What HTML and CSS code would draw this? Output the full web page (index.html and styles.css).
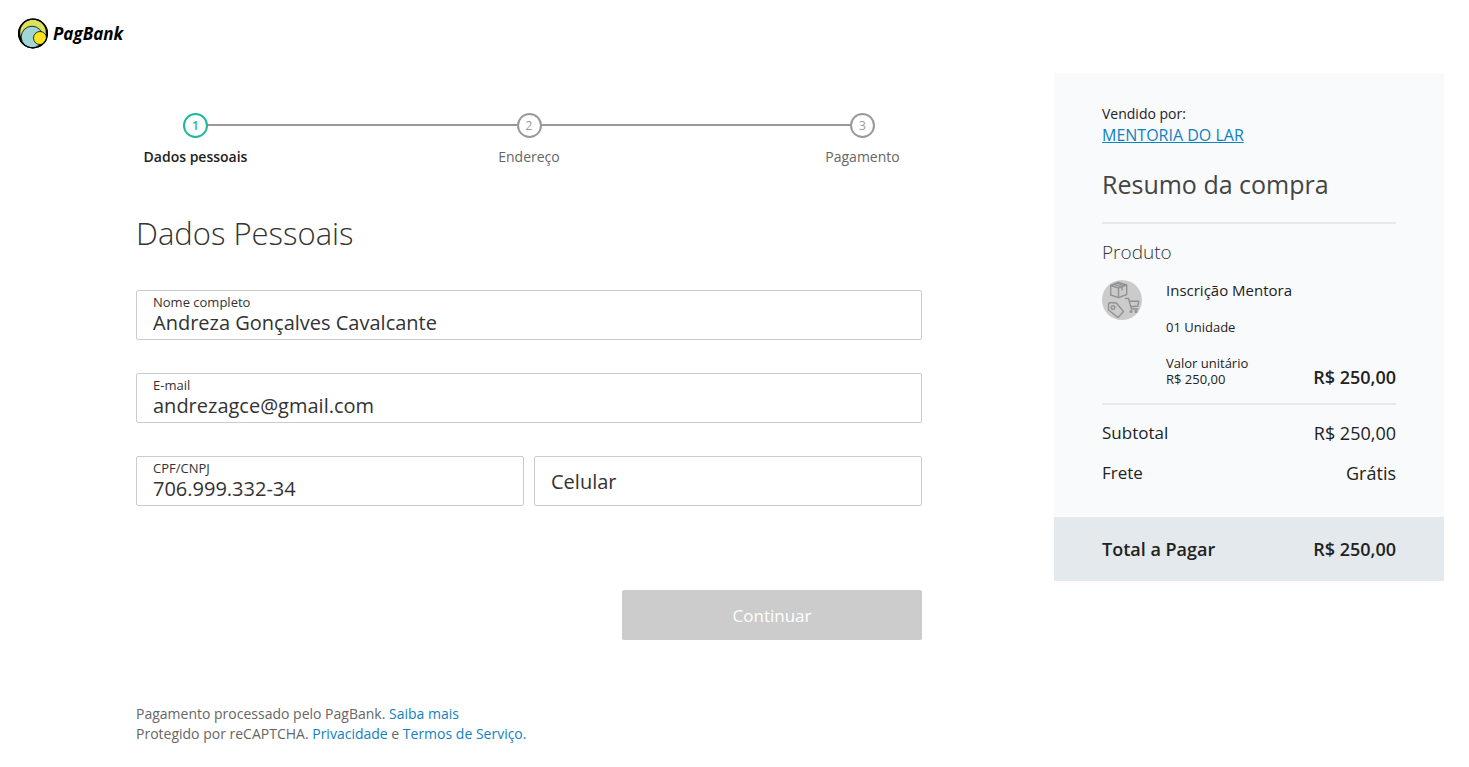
FILE: index.html
```html
<!DOCTYPE html>
<html lang="pt-BR">
<head>
    <meta charset="UTF-8">
    <meta name="viewport" content="width=device-width, initial-scale=1.0">
    <title>PagBank - Dados Pessoais</title>
    <link rel="stylesheet" href="styles.css">
</head>
<body>

<header class="header">
    <svg class="logo-icon" viewBox="0 0 31 31" aria-hidden="true">
        <circle cx="15" cy="15.500" r="15" fill="#000"/>
        <circle cx="15" cy="14.500" r="12.800" fill="#dbe35b"/>
        <circle cx="14" cy="19" r="10.800" fill="#9fd6d8" stroke="#000" stroke-width=".8"/>
        <circle cx="22" cy="20" r="6.500" fill="#ffe41f" stroke="#000" stroke-width=".8"/>
        <circle cx="15" cy="15.500" r="14.400" fill="none" stroke="#000" stroke-width="1.200"/>
    </svg>
    <span class="logo-text">PagBank</span>
</header>

<div class="page">
    <main class="content">
        <ol class="steps">
            <li class="step active">
                <span class="step-number">1</span>
                <span class="step-label">Dados pessoais</span>
            </li>
            <li class="step">
                <span class="step-number">2</span>
                <span class="step-label">Endereço</span>
            </li>
            <li class="step">
                <span class="step-number">3</span>
                <span class="step-label">Pagamento</span>
            </li>
        </ol>

        <h1 class="title">Dados Pessoais</h1>

        <form class="form">
            <div class="field">
                <label for="name">Nome completo</label>
                <input type="text" id="name" value="Andreza Gonçalves Cavalcante">
            </div>
            <div class="field">
                <label for="email">E-mail</label>
                <input type="email" id="email" value="andrezagce@gmail.com">
            </div>
            <div class="form-row">
                <div class="field">
                    <label for="document">CPF/CNPJ</label>
                    <input type="text" id="document" value="706.999.332-34">
                </div>
                <div class="field field-empty">
                    <label for="phone">Celular</label>
                    <input type="tel" id="phone">
                </div>
            </div>
            <button type="submit" class="button" disabled>Continuar</button>
        </form>

        <footer class="footer">
            <p>Pagamento processado pelo PagBank. <a href="#">Saiba mais</a></p>
            <p>Protegido por reCAPTCHA. <a href="#">Privacidade</a> e <a href="#">Termos de Serviço.</a></p>
        </footer>
    </main>

    <aside class="summary">
        <div class="summary-body">
            <p class="seller-label">Vendido por:</p>
            <a class="seller" href="#">MENTORIA DO LAR</a>
            <h2 class="summary-title">Resumo da compra</h2>

            <section class="products">
                <h3 class="products-title">Produto</h3>
                <div class="product">
                    <svg class="product-icon" viewBox="0 0 40 40" aria-hidden="true">
                        <circle cx="20" cy="20" r="20" fill="#cbcbcb"/>
                        <g fill="none" stroke="#929292" stroke-width="1.4" stroke-linejoin="round" stroke-linecap="round">
                            <!-- caixa -->
                            <path d="M8.700 5.500 16.500 2.500 24.700 5 24.700 14.500 16.500 17.700 8.700 15z"/>
                            <path d="M8.700 5.500 16.500 8 24.700 5M16.500 8v9.500M12 4.300l8 2.600v3M15 3.200l7.500 2.600"/>
                            <!-- etiqueta -->
                            <path d="M6.500 24 7.500 22.700h6.500l7.500 8.800-5.500 6L6.500 30z"/>
                            <circle cx="11" cy="27.500" r="1.800"/>
                            <!-- carrinho -->
                            <path d="M23.500 18.500h3l3 10.500h6.500M27.300 21.200h9.500l-1 4.800-7 .7"/>
                            <circle cx="29" cy="31.500" r=".8"/>
                            <circle cx="34" cy="31.500" r=".8"/>
                        </g>
                    </svg>
                    <div class="product-info">
                        <p class="product-name">Inscrição Mentora</p>
                        <p class="product-amount">01 Unidade</p>
                        <div class="product-price">
                            <p class="unit-price">Valor unitário<br>R$ 250,00</p>
                            <strong>R$ 250,00</strong>
                        </div>
                    </div>
                </div>
            </section>

            <dl class="values">
                <div class="value-row">
                    <dt>Subtotal</dt>
                    <dd>R$ 250,00</dd>
                </div>
                <div class="value-row">
                    <dt>Frete</dt>
                    <dd>Grátis</dd>
                </div>
            </dl>
        </div>
        <div class="total">
            <span>Total a Pagar</span>
            <span>R$ 250,00</span>
        </div>
    </aside>
</div>

</body>
</html>
```
FILE: styles.css
```css
* {
    box-sizing: border-box;
}
body {
    margin: 0;
    background: #fff;
    color: #222;
    font-family: "Open Sans", "Noto Sans", sans-serif;
    font-size: 14px;
    line-height: 20px;
}
h1, h2, h3, p, ol, dl, dd {
    margin: 0;
    padding: 0;
}
a {
    color: #1181bf;
    text-decoration: none;
}
.header {
    display: flex;
    align-items: center;
    gap: 4px;
    padding: 18px 18px 24px;
}
.logo-icon {
    width: 31px;
    height: 31px;
}
.logo-text {
    color: #000;
    font-size: 17px;
    font-weight: 700;
    font-style: italic;
}
.page {
    display: flex;
    align-items: flex-start;
    padding-right: 25px;
}
.content {
    flex: 1;
    padding: 40px 132px 20px 136px;
}

/* Etapas */
.steps {
    display: flex;
    justify-content: space-between;
    list-style: none;
    background: linear-gradient(#999, #999) no-repeat center 11px / calc(100% - 120px) 2px;
}
.step {
    display: flex;
    flex-direction: column;
    align-items: center;
    gap: 9px;
    width: 119px;
    color: #666;
}
.step-number {
    width: 25px;
    height: 25px;
    border: 2px solid #999;
    border-radius: 50%;
    background: #fff;
    color: #999;
    font-size: 12px;
    line-height: 21px;
    text-align: center;
}
.step.active {
    color: #222;
    font-weight: 600;
}
.step.active .step-number {
    border-color: #1bb99a;
    color: #1bb99a;
}

.title {
    margin: 46px 0 37px;
    color: #333;
    font-size: 31px;
    font-weight: 300;
    line-height: 40px;
}

/* Formulário */
.form {
    display: flex;
    flex-direction: column;
    gap: 33px;
}
.form-row {
    display: grid;
    grid-template-columns: 1fr 1fr;
    gap: 10px;
}
.field {
    display: flex;
    flex-direction: column;
    position: relative;
    height: 50px;
    padding: 3px 16px;
    border: 1px solid #ccc;
    border-radius: 2px;
    color: #333;
}
.field label {
    font-size: 13px;
    line-height: 16px;
}
.field input {
    width: 100%;
    padding: 0;
    border: 0;
    outline: 0;
    background: none;
    color: #333;
    font-family: inherit;
    font-size: 20px;
    line-height: 26px;
}
.field-empty label {
    position: absolute;
    top: 0;
    left: 16px;
    font-size: 20px;
    line-height: 50px;
}
.field-empty input {
    height: 100%;
}
.button {
    align-self: flex-end;
    width: 300px;
    height: 50px;
    margin-top: 51px;
    border: 0;
    border-radius: 2px;
    background: #ccc;
    color: #fff;
    font-family: inherit;
    font-size: 17px;
}
.footer {
    margin-top: 64px;
    color: #666;
}

/* Resumo da compra */
.summary {
    width: 390px;
    background: #f9fafc;
}
.summary-body {
    padding: 31px 48px 32px;
}
.seller {
    font-size: 16px;
    line-height: 22px;
    text-decoration: underline;
}
.summary-title {
    margin: 20px 0;
    color: #444;
    font-size: 25px;
    font-weight: 400;
    line-height: 36px;
}
.products {
    padding: 14px 0 16px;
    border-top: 2px solid #e4e9ed;
    border-bottom: 2px solid #e4e9ed;
}
.products-title {
    margin-bottom: 14px;
    color: #333;
    font-size: 19px;
    font-weight: 300;
    line-height: 28px;
}
.product {
    display: flex;
    align-items: flex-start;
    gap: 24px;
}
.product-icon {
    flex: none;
    width: 40px;
    height: 40px;
}
.product-info {
    flex: 1;
}
.product-name {
    font-size: 15px;
}
.product-amount {
    margin: 17px 0 18px;
    font-size: 13px;
}
.product-price {
    display: flex;
    justify-content: space-between;
    align-items: flex-end;
}
.product-price strong {
    font-size: 18px;
    font-weight: 600;
}
.unit-price {
    font-size: 13px;
    line-height: 16px;
}
.values {
    display: flex;
    flex-direction: column;
    gap: 16px;
    padding-top: 16px;
    font-size: 17px;
    line-height: 24px;
}
.values dd {
    font-size: 18px;
}
.value-row {
    display: flex;
    justify-content: space-between;
}
.total {
    display: flex;
    justify-content: space-between;
    padding: 20px 48px;
    background: #e4e9ed;
    font-size: 18px;
    font-weight: 600;
    line-height: 24px;
}
```
